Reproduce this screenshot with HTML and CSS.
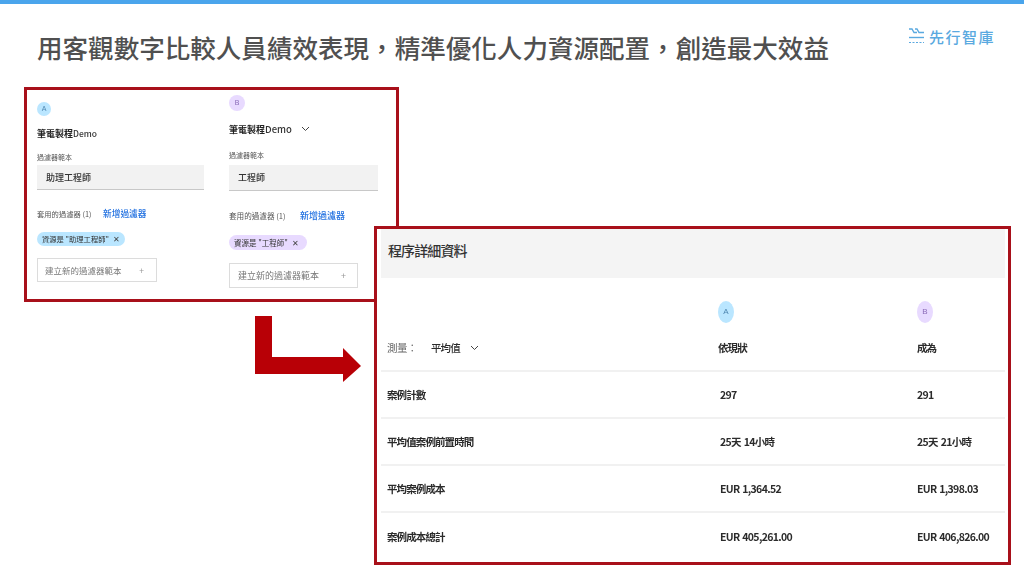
FILE: index.html
```html
<!DOCTYPE html>
<html lang="zh-Hant">
<head>
<meta charset="utf-8">
<title>先行智庫</title>
<link rel="stylesheet" href="styles.css">
</head>
<body>
<div class="slide">
  <header class="head">
    <h1 class="title">用客觀數字比較人員績效表現&#xFF0C;精準優化人力資源配置&#xFF0C;創造最大效益</h1>
    <div class="logo">
      <svg class="logo-mark" width="15" height="16" viewBox="0 0 15 16" fill="none" stroke="#5aa9e0" stroke-width="1.4">
        <path d="M0 1h3l2 3.500h3"/><path d="M6 1h2l2 3.500h5"/><path d="M0 9.500h15"/><path d="M0 14.500h15" stroke-dasharray="2 1.500" stroke-width="1"/>
      </svg>
      <span>先行智庫</span>
    </div>
  </header>

  <section class="panel filters">
    <div class="col col-a">
      <span class="badge badge-a">A</span>
      <div class="name">筆電製程<span class="name-latin">Demo</span></div>
      <div class="label">過濾器範本</div>
      <div class="input">助理工程師</div>
      <div class="applied"><span class="label">套用的過濾器 (1)</span><span class="add">新增過濾器</span></div>
      <div class="chip chip-a">資源是 "助理工程師" <span class="x">✕</span></div>
      <div class="new">建立新的過濾器範本<span class="plus">+</span></div>
    </div>
    <div class="col col-b">
      <span class="badge badge-b">B</span>
      <div class="name">筆電製程<span class="name-latin">Demo</span>
        <svg class="chev" width="9" height="6" viewBox="0 0 9 6" fill="none" stroke="#444" stroke-width="1"><path d="M1 1l3.500 3.500L8 1"/></svg>
      </div>
      <div class="label">過濾器範本</div>
      <div class="input">工程師</div>
      <div class="applied"><span class="label">套用的過濾器 (1)</span><span class="add">新增過濾器</span></div>
      <div class="chip chip-b">資源是 "工程師" <span class="x">✕</span></div>
      <div class="new">建立新的過濾器範本<span class="plus">+</span></div>
    </div>
  </section>

  <svg class="arrow" width="106" height="66" viewBox="0 0 106 66">
    <path fill="#b80006" d="M0 0h17v41h71V32l18 18-18 16V58H0z"/>
  </svg>

  <section class="panel details">
    <h2 class="details-head">程序詳細資料</h2>
    <div class="row row-top">
      <div class="measure"><span class="measure-label">測量&#xFF1A;</span><span class="measure-value">平均值</span>
        <svg width="9" height="6" viewBox="0 0 9 6" fill="none" stroke="#444" stroke-width="1"><path d="M1 1l3.500 3.500L8 1"/></svg>
      </div>
      <div class="scenario scenario-a"><span class="oval oval-a">A</span><span>依現狀</span></div>
      <div class="scenario"><span class="oval oval-b">B</span><span>成為</span></div>
    </div>
    <div class="row"><div>案例計數</div><div class="val">297</div><div class="val">291</div></div>
    <div class="row"><div>平均值案例前置時間</div><div class="val">25天 14小時</div><div class="val">25天 21小時</div></div>
    <div class="row"><div>平均案例成本</div><div class="val">EUR 1,364.52</div><div class="val">EUR 1,398.03</div></div>
    <div class="row row-last"><div>案例成本總計</div><div class="val">EUR 405,261.00</div><div class="val">EUR 406,826.00</div></div>
  </section>
</div>
</body>
</html>
```
FILE: styles.css
```css
* { box-sizing: border-box; }
html, body { margin: 0; padding: 0; }
body {
  width: 1024px;
  height: 576px;
  overflow: hidden;
  background: #fff;
  font-family: "Noto Sans CJK TC", "Noto Sans", sans-serif;
  color: #333;
}
.slide {
  position: relative;
  width: 1024px;
  height: 576px;
  border-top: 4px solid #4aa5ec;
}
.head {
  display: flex;
  justify-content: space-between;
  padding: 25px 29px 0 37px;
}
.title {
  margin: 0;
  font-size: 25.560px;
  line-height: 36px;
  font-weight: 500;
  color: #505050;
  white-space: nowrap;
}
.logo {
  display: flex;
  align-items: center;
  gap: 5px;
  height: 20px;
  margin-top: -3px;
  font-size: 15px;
  font-weight: 500;
  letter-spacing: 1.500px;
  color: #5aa9e0;
}
.panel {
  position: absolute;
  background: #fff;
  border: 3px solid #a8101a;
}
.filters {
  left: 24px;
  top: 83px;
  width: 375px;
  height: 215px;
  display: flex;
}
.col { display: flex; flex-direction: column; align-items: flex-start; filter: blur(0.3px); }
.col-a { width: 192px; padding: 12px 0 0 10px; }
.col-b { padding: 5px 0 0 10px; }
.badge {
  width: 14px;
  height: 14px;
  border-radius: 50%;
  font-size: 7px;
  line-height: 14px;
  text-align: center;
  font-family: "Liberation Sans", sans-serif;
}
.badge-a { background: #bae6ff; color: #4d86b0; }
.badge-b { background: #e8daff; color: #8a6bb8; width: 16px; height: 16px; line-height: 16px; }
.name {
  margin-top: 9px;
  height: 16px;
  display: flex;
  align-items: center;
  font-size: 9px;
  font-weight: 700;
  color: #222;
}
.col-b .name { margin-top: 10px; }
.name-latin { font-weight: 500; font-size: 8.500px; color: #333; }
.col-b .name-latin { font-size: 9.500px; }
.chev { margin-left: 9px; }
.col-a .name + .label { margin-top: 10px; }
.col-b .name + .label { margin-top: 12px; }
.label {
  font-size: 7px;
  line-height: 12px;
  color: #555;
}
.input {
  margin-top: 2px;
  width: 167px;
  height: 25px;
  padding: 1px 0 0 9px;
  background: #f2f2f2;
  border-bottom: 1px solid #c8c8c8;
  font-size: 9px;
  line-height: 24px;
  font-weight: 500;
  color: #333;
}
.col-b .input { width: 149px; height: 26px; margin-top: 4px; }
.applied {
  margin-top: 18px;
  display: flex;
  align-items: center;
}
.col-b .applied { margin-top: 19px; }
.applied .label { width: 66px; white-space: nowrap; font-size: 7.300px; }
.col-b .applied .label { width: 71px; font-size: 7.600px; }
.add { font-size: 8.700px; line-height: 12px; color: #1f6fe0; font-weight: 500; }
.col-b .add { font-size: 9px; }
.chip {
  margin-top: 12px;
  height: 14px;
  padding: 0 5px;
  border-radius: 7px;
  font-size: 7.300px;
  line-height: 14px;
  color: #333;
  white-space: pre;
}
.col-b .chip { margin-top: 13px; height: 15px; line-height: 15px; border-radius: 8px; font-size: 7.500px; padding: 0 8px 0 5px; }
.chip-a { background: #bae6ff; }
.chip-b { background: #e8daff; }
.x { font-size: 8px; margin-left: 2px; color: #444; }
.new {
  margin-top: 12px;
  width: 120px;
  height: 24px;
  display: flex;
  justify-content: space-between;
  padding: 0 12px 0 7px;
  border: 1px solid #dcdcdc;
  font-size: 8.500px;
  line-height: 22px;
  color: #777;
}
.col-b .new { width: 129px; height: 25px; line-height: 23px; padding: 0 11px 0 8px; margin-top: 13px; font-size: 9px; }
.plus { color: #999; }
.arrow { position: absolute; left: 255px; top: 312px; }
.details {
  left: 374px;
  top: 222px;
  width: 637px;
  height: 339px;
  padding: 0 3px 0 4px;
  display: flex;
  flex-direction: column;
}
.details-head {
  margin: 0;
  height: 49px;
  padding-left: 7px;
  background: #f4f4f4;
  font-size: 14px;
  letter-spacing: -0.900px;
  line-height: 42px;
  font-weight: 500;
  color: #333;
}
.row {
  display: grid;
  grid-template-columns: 333px 197px 1fr;
  align-items: center;
  height: 47px;
  padding-left: 6px;
  border-bottom: 2px solid #f1f1f1;
  font-size: 10.500px;
  letter-spacing: -0.900px;
  font-weight: 700;
  color: #2b2b2b;
  white-space: nowrap;
}
.row > * { filter: blur(0.25px); }
.val {
  letter-spacing: -0.650px;
  word-spacing: 1px;
}
.row-top {
  height: 94px;
  align-items: end;
  padding-bottom: 15px;
}
.row-last { border-bottom: 0; }
.measure { display: flex; align-items: center; font-weight: 500; }
.measure-label { width: 44px; color: #666; font-weight: 400; letter-spacing: -0.500px; }
.measure-value { margin-right: 10px; }
.scenario { display: flex; flex-direction: column; align-items: flex-start; gap: 17px; }
.scenario-a { margin-left: -2px; }
.oval {
  width: 16px;
  height: 22px;
  border-radius: 50%;
  font-size: 8px;
  line-height: 22px;
  text-align: center;
  font-weight: 400;
  letter-spacing: 0;
  font-family: "Liberation Sans", sans-serif;
}
.oval-a { background: #bae6ff; color: #4d86b0; }
.oval-b { background: #e8daff; color: #8a6bb8; }
```
